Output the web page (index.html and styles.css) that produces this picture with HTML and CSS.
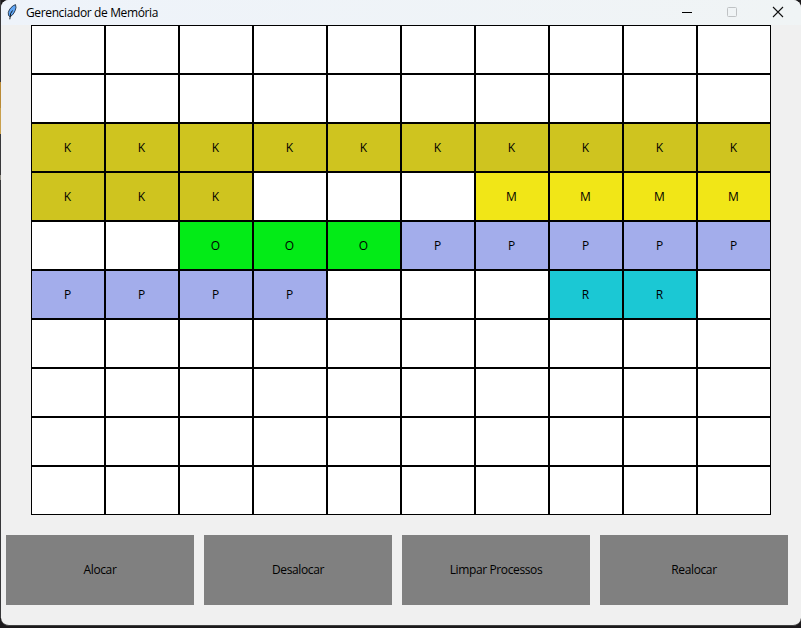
FILE: index.html
```html
<!DOCTYPE html>
<html lang="pt-BR">
<head>
<meta charset="utf-8">
<title>Gerenciador de Memória</title>
<link rel="stylesheet" href="styles.css">
</head>
<body>
<div class="window">
  <header class="titlebar">
    <svg class="feather" width="10" height="16" viewBox="0 0 10 16">
      <path d="M8.5.6C5.500 1.500 2 5 1.300 8.500L1.500 11.500L3 12.700C6 11.500 8.500 7 9 3.500Z" fill="#5fa5f5" stroke="#15202c" stroke-width=".8"/>
      <path d="M5.500 6.500L3.600 9.500L2.800 15.300" fill="none" stroke="#101820"/>
    </svg>
    <h1 class="title">Gerenciador de Memória</h1>
    <div class="controls">
      <svg width="10" height="10" viewBox="0 0 10 10"><path d="M0 5.500H10" stroke="#000"/></svg>
      <svg width="10" height="10" viewBox="0 0 10 10"><rect x=".5" y=".5" width="9" height="9" rx="1" fill="none" stroke="#bfc2c4"/></svg>
      <svg width="10" height="10" viewBox="0 0 10 10"><path d="M0 0L10 10M10 0L0 10" stroke="#111" stroke-width="1.100"/></svg>
    </div>
  </header>
  <main class="memory" id="memory"></main>
  <footer class="actions">
    <button class="action">Alocar</button>
    <button class="action">Desalocar</button>
    <button class="action">Limpar Processos</button>
    <button class="action">Realocar</button>
  </footer>
</div>
<script src="memory.js"></script>
</body>
</html>
```
FILE: styles.css
```css
* { box-sizing: border-box; }

body {
  margin: 0;
  height: 628px;
  padding: 0 0 2px 1px;
  overflow: hidden;
  background:
    linear-gradient(#38383a 82px, #b98a35 82px 108px, #c9a04c 108px 134px, #38383a 134px 175px, #8d8a80 175px 180px, #38383a 180px 618px, transparent 618px) 0 0 / 1px 100% no-repeat,
    #1c1a1c;
  font: 12px/16px "Open Sans", "Noto Sans", sans-serif;
  color: #000;
}

.window {
  height: 626px;
  background: #f0f0f0;
  border-bottom: 1px solid #404040;
  border-radius: 8px;
  overflow: hidden;
}

.titlebar {
  display: flex;
  align-items: center;
  height: 25px;
  padding-left: 6px;
  background: linear-gradient(90deg, #eef3fa, #f0f4f5);
}

.feather { margin-top: -1px; }

.title {
  margin: 0 0 0 9px;
  font-size: 12px;
  font-weight: 400;
  letter-spacing: -0.37px;
}

.controls {
  display: flex;
  gap: 35px;
  margin-left: auto;
  padding: 0 18px 1px 0;
}

.controls svg { display: block; overflow: visible; }
.controls svg:last-child { margin-left: 1px; }

.memory {
  display: grid;
  grid-template-columns: repeat(10, 74px);
  grid-auto-rows: 49px;
  width: 740px;
  margin-left: 30px;
}

.cell {
  display: flex;
  align-items: center;
  justify-content: center;
  padding-right: 1px;
  border: 1px solid #000;
  background: #fff;
}

.k { background: #cfc41f; }
.m { background: #f1e617; }
.o { background: #03eb17; }
.p { background: #a3adeb; }
.r { background: #1bc8d4; }

.actions {
  display: flex;
  gap: 10px;
  padding: 20px 0 0 5px;
}

.action {
  width: 188px;
  height: 70px;
  padding: 0;
  border: 0;
  background: #808080;
  color: #000;
  font: inherit;
  letter-spacing: -0.38px;
}
```
FILE: memory.js
```js
const rows = [
  "..........",
  "..........",
  "KKKKKKKKKK",
  "KKK...MMMM",
  "..OOOPPPPP",
  "PPPP...RR.",
  "..........",
  "..........",
  "..........",
  ".........."
];
const memory = document.getElementById("memory");
for (const id of rows.join("")) {
  const cell = document.createElement("div");
  cell.className = "cell";
  if (id !== ".") {
    cell.classList.add(id.toLowerCase());
    cell.textContent = id;
  }
  memory.append(cell);
}
```
